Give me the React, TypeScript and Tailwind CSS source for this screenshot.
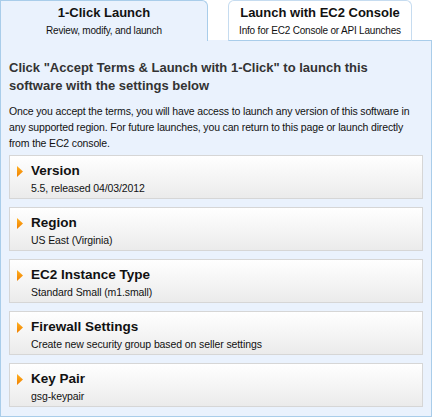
import React from "react";

const settings = [
  { title: "Version", value: "5.5, released 04/03/2012" },
  { title: "Region", value: "US East (Virginia)" },
  { title: "EC2 Instance Type", value: "Standard Small (m1.small)" },
  { title: "Firewall Settings", value: "Create new security group based on seller settings" },
  { title: "Key Pair", value: "gsg-keypair" },
];

const Arrow = () => (
  <svg width="6" height="11" viewBox="0 0 6 11" className="shrink-0 mt-[3px]">
    <defs>
      <linearGradient id="arr" x1="0" y1="0" x2="0" y2="1">
        <stop offset="0" stopColor="#ffb020" />
        <stop offset="1" stopColor="#f08000" />
      </linearGradient>
    </defs>
    <path d="M0 0 L6 5.5 L0 11 Z" fill="url(#arr)" />
  </svg>
);

const SettingCard = ({ title, value }: { title: string; value: string }) => (
  <div className="h-[44px] border border-[#d6d6d6] bg-gradient-to-b from-white to-[#ebebeb] pl-[7px] pt-[7px] flex gap-[8px]">
    <Arrow />
    <div className="flex flex-col">
      <span className="text-[13.5px] leading-[16px] font-bold text-[#111]">{title}</span>
      <span className="text-[10.5px] leading-[16px] tracking-[-0.1px] text-[#111] mt-[1px]">{value}</span>
    </div>
  </div>
);

export default function App() {
  return (
    <div className="w-[432px] h-[418px] bg-white text-[#333]" style={{ fontFamily: '"Liberation Sans", Arial, sans-serif' }}>
      <div className="flex items-end h-[41px] relative z-10">
        <div className="w-[208px] h-[41px] bg-[#eaf2fd] border-t border-l border-r border-[#a9cdea] rounded-tr-[6px] flex flex-col items-center pt-[4px]">
          <span className="text-[13px] leading-[16px] font-bold text-[#111]">1-Click Launch</span>
          <span className="text-[10px] leading-[14px] mt-[3px] tracking-[-0.2px] text-[#111] whitespace-nowrap">Review, modify, and launch</span>
        </div>
        <div className="ml-[20px] w-[184px] h-[41px] bg-white border-t border-l border-r border-[#c6dcf0] rounded-t-[6px] flex flex-col items-center pt-[4px] border-b border-b-[#a9cdea]">
          <span className="text-[13px] leading-[16px] font-bold text-[#111] whitespace-nowrap">Launch with EC2 Console</span>
          <span className="text-[10px] leading-[14px] mt-[3px] tracking-[-0.2px] text-[#111] whitespace-nowrap">Info for EC2 Console or API Launches</span>
        </div>
        <div className="flex-1 h-full border-b border-[#a9cdea]" />
      </div>
      <div className="h-[377px] -mt-px bg-[#eaf2fd] border border-[#a9cdea] border-t-0 px-[8px] pt-[19px]">
        <h2 className="text-[13px] leading-[18px] font-bold text-[#333]">
          Click "Accept Terms &amp; Launch with 1-Click" to launch this
          <br />
          software with the settings below
        </h2>
        <p className="text-[10.5px] leading-[16px] tracking-[-0.15px] text-[#111] mt-[8px] whitespace-nowrap">
          Once you accept the terms, you will have access to launch any version of this software in
          <br />
          any supported region. For future launches, you can return to this page or launch directly
          <br />
          from the EC2 console.
        </p>
        <div className="flex flex-col gap-[8px] mt-[4px]">
          {settings.map((s) => (
            <SettingCard key={s.title} {...s} />
          ))}
        </div>
      </div>
    </div>
  );
}
